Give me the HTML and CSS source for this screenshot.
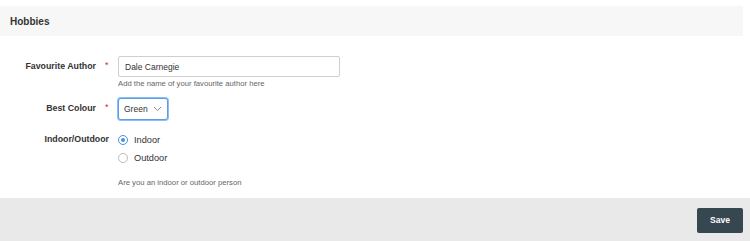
FILE: index.html
```html
<!DOCTYPE html>
<html lang="en">
<head>
  <meta charset="UTF-8">
  <meta name="viewport" content="width=device-width, initial-scale=1.0">
  <title>Hobbies</title>
  <link rel="stylesheet" href="styles.css">
</head>
<body>
  <div class="panel">
    <div class="panel-header">
      <h2>Hobbies</h2>
    </div>

    <div class="panel-body">
      <div class="form-row">
        <label class="form-label" for="author">Favourite Author</label>
        <span class="required">*</span>
        <div class="form-control">
          <input id="author" class="text-input" type="text" value="Dale Carnegie">
          <div class="help">Add the name of your favourite author here</div>
        </div>
      </div>

      <div class="form-row">
        <label class="form-label" for="colour">Best Colour</label>
        <span class="required">*</span>
        <div class="form-control">
          <div class="select focused">
            <span>Green</span>
            <svg width="9" height="6" viewBox="0 0 9 6"><path d="M1 1l3.5 3.5L8 1" fill="none" stroke="#8a8a8a" stroke-width="1"/></svg>
          </div>
        </div>
      </div>

      <div class="form-row radio-row">
        <label class="form-label">Indoor/Outdoor</label>
        <div class="form-control">
          <div class="radio checked"><span class="dot"></span>Indoor</div>
          <div class="radio"><span class="dot"></span>Outdoor</div>
          <div class="help help-radio">Are you an indoor or outdoor person</div>
        </div>
      </div>
    </div>
  </div>

  <div class="footer">
    <button class="btn-save">Save</button>
  </div>
</body>
</html>
```

FILE: styles.css
```css
body {
  margin: 0;
  font-family: "Liberation Sans", Arial, sans-serif;
  color: #333;
  background: #fff;
  overflow: hidden;
}

.panel {
  width: 743px;
  padding-top: 6px;
}

.panel-header {
  background-color: #f7f7f7;
  height: 30px;
  display: flex;
  align-items: center;
  padding-left: 10px;
}

.panel-header h2 {
  margin: 0;
  font-size: 10px;
  font-weight: bold;
  color: #333;
}

.panel-body {
  box-sizing: border-box;
  padding-top: 20px;
  height: 162px;
}

.form-row {
  display: grid;
  grid-template-columns: 96px 22px 1fr;
}

.form-label {
  text-align: right;
  font-size: 8.8px;
  font-weight: bold;
  color: #333;
  line-height: 21px;
}

.radio-row {
  grid-template-columns: 109px 1fr;
  column-gap: 9px;
}

.radio-row .form-label {
  line-height: 16px;
}

.required {
  color: #e0292b;
  font-size: 9px;
  line-height: 19px;
  padding-left: 9px;
}

.text-input {
  box-sizing: border-box;
  width: 222px;
  height: 21px;
  border: 1px solid #cfcfcf;
  border-radius: 2px;
  padding: 0 6px;
  font-family: inherit;
  font-size: 8.5px;
  color: #333;
  margin: 0;
  display: block;
}

.help {
  font-size: 7.7px;
  color: #666;
  line-height: 10px;
  margin-top: 2px;
  margin-bottom: 9px;
}

.select {
  box-sizing: border-box;
  width: 50px;
  height: 22px;
  border: 1px solid #c9c9c9;
  border-radius: 3px;
  display: flex;
  align-items: center;
  justify-content: space-between;
  padding: 0 5px 0 5px;
  font-size: 8.5px;
  color: #333;
  background: #fff;
  margin-bottom: 11px;
}

.select.focused {
  border-color: #5b9ee8;
  box-shadow: 0 0 0 1px #8dbdf1;
}

.radio {
  display: flex;
  align-items: center;
  font-size: 9.2px;
  color: #333;
  height: 18px;
}

.radio .dot {
  box-sizing: border-box;
  width: 10px;
  height: 10px;
  border: 1px solid #bdbdbd;
  border-radius: 50%;
  margin-right: 6px;
  background: #fff;
  position: relative;
}

.radio.checked .dot {
  border-color: #4a90d9;
}

.radio.checked .dot::after {
  content: "";
  position: absolute;
  left: 2px;
  top: 2px;
  width: 4px;
  height: 4px;
  border-radius: 50%;
  background: #4a90d9;
}

.help-radio {
  margin-top: 11px;
}

.footer {
  background-color: #e9e9e9;
  height: 43px;
  display: flex;
  justify-content: flex-end;
  align-items: center;
  padding-right: 7px;
}

.btn-save {
  width: 46px;
  height: 25px;
  background-color: #37474f;
  color: #fff;
  border: none;
  border-radius: 2px;
  font-family: inherit;
  font-size: 8.5px;
  font-weight: bold;
  margin-top: 1px;
}
```
